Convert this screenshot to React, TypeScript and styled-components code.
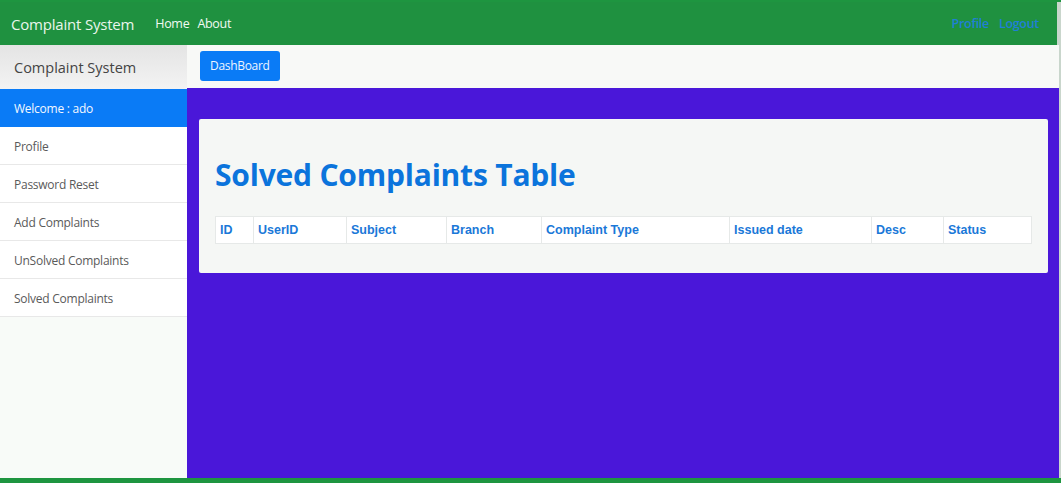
import React from "react";
import styled, { createGlobalStyle } from "styled-components";

const Global = createGlobalStyle`
  html, body { margin: 0; padding: 0; height: 100%; }
  body { font-family: "Open Sans", "Noto Sans", sans-serif; background: #1e9540; }
  #root { height: 100%; }
`;

const Page = styled.div`
  width: 1061px;
  height: 483px;
  display: flex;
  flex-direction: column;
  background: #1e9540;
  overflow: hidden;
`;

const NavBar = styled.header`
  height: 43px;
  margin-top: 2px;
  display: flex;
  align-items: center;
  padding: 0 8px 0 11px;
  background: #1f9140;
  border-right: 4px solid #c9d6cc;
  flex-shrink: 0;
`;

const Brand = styled.span`
  font-size: 15px;
  color: #eaf6ec;
  margin-right: 21px;
  letter-spacing: -0.2px;
`;

const NavLink = styled.span<{ $right?: boolean }>`
  font-size: 12.5px;
  color: ${(p) => (p.$right ? "#1f7fd6" : "#f2faf3")};
  margin-right: ${(p) => (p.$right ? "10px" : "8px")};
  font-weight: ${(p) => (p.$right ? 600 : 400)};
  letter-spacing: -0.3px;
`;

const Spacer = styled.div`
  flex: 1;
`;

const Body = styled.div`
  flex: 1;
  display: flex;
  min-height: 0;
`;

const Sidebar = styled.aside`
  width: 187px;
  background: #f8fbf8;
  display: flex;
  flex-direction: column;
  flex-shrink: 0;
`;

const SideHeader = styled.div`
  height: 44px;
  display: flex;
  align-items: center;
  padding-left: 14px;
  font-size: 14.5px;
  color: #444;
  background: linear-gradient(180deg, #e4e4e4 0%, #f3f3f3 100%);
`;

const SideItem = styled.div<{ $active?: boolean }>`
  height: 37px;
  box-sizing: border-box;
  height: 38px;
  display: flex;
  align-items: center;
  padding: 2px 0 0 14px;
  font-size: 12px;
  letter-spacing: -0.25px;
  color: ${(p) => (p.$active ? "#f3f8ff" : "#5a5a5a")};
  background: ${(p) => (p.$active ? "#0a7bf6" : "#ffffff")};
  border-bottom: 1px solid ${(p) => (p.$active ? "#0a7bf6" : "#e8e8e8")};
`;

const Main = styled.main`
  flex: 1;
  display: flex;
  flex-direction: column;
  background: #4a17d9;
  border-right: 4px solid #c9d6cc;
`;

const TopBar = styled.div`
  height: 43px;
  display: flex;
  align-items: center;
  padding-left: 13px;
  background: #f8f9f7;
  flex-shrink: 0;
`;

const Button = styled.button`
  height: 30px;
  padding: 0 10px;
  border: none;
  border-radius: 3px;
  background: #0a7bf6;
  color: #eef5ff;
  font-family: "Open Sans", sans-serif;
  font-size: 12px;
  letter-spacing: -0.3px;
  margin-top: -2px;
`;

const Content = styled.div`
  padding: 31px 11px 0 12px;
`;

const Card = styled.section`
  background: #f5f7f5;
  border-radius: 2px;
  padding: 36px 16px 29px 16px;
`;

const Title = styled.h1`
  margin: 0 0 21px 0;
  font-size: 30px;
  font-weight: 700;
  color: #0b74dc;
  letter-spacing: -0.2px;
  line-height: 40px;
`;

const Table = styled.table`
  width: 100%;
  table-layout: fixed;
  border-collapse: collapse;
  background: #ffffff;
`;

const Col = styled.col<{ $w: number }>`
  width: ${(p) => p.$w}px;
`;

const Th = styled.th`
  text-align: left;
  font-family: "Liberation Sans", Arial, sans-serif;
  font-size: 12.5px;
  font-weight: 700;
  color: #1a78d8;
  padding: 0 4px;
  height: 26px;
  border: 1px solid #e6e9e8;
  white-space: nowrap;
`;

const columns: [string, number][] = [
  ["ID", 38],
  ["UserID", 93],
  ["Subject", 100],
  ["Branch", 95],
  ["Complaint Type", 188],
  ["Issued date", 142],
  ["Desc", 72],
  ["Status", 88],
];

const BottomStripe = styled.div`
  height: 5px;
  background: #1e9540;
  flex-shrink: 0;
`;

export default function App() {
  return (
    <Page>
      <Global />
      <NavBar>
        <Brand>Complaint System</Brand>
        <NavLink>Home</NavLink>
        <NavLink>About</NavLink>
        <Spacer />
        <NavLink $right>Profile</NavLink>
        <NavLink $right>Logout</NavLink>
      </NavBar>
      <Body>
        <Sidebar>
          <SideHeader>Complaint System</SideHeader>
          <SideItem $active>Welcome : ado</SideItem>
          <SideItem>Profile</SideItem>
          <SideItem>Password Reset</SideItem>
          <SideItem>Add Complaints</SideItem>
          <SideItem>UnSolved Complaints</SideItem>
          <SideItem>Solved Complaints</SideItem>
        </Sidebar>
        <Main>
          <TopBar>
            <Button>DashBoard</Button>
          </TopBar>
          <Content>
            <Card>
              <Title>Solved Complaints Table</Title>
              <Table>
                <colgroup>
                  {columns.map(([c, w]) => (
                    <Col key={c} $w={w} />
                  ))}
                </colgroup>
                <thead>
                  <tr>
                    {columns.map(([c]) => (
                      <Th key={c}>{c}</Th>
                    ))}
                  </tr>
                </thead>
              </Table>
            </Card>
          </Content>
        </Main>
      </Body>
      <BottomStripe />
    </Page>
  );
}
